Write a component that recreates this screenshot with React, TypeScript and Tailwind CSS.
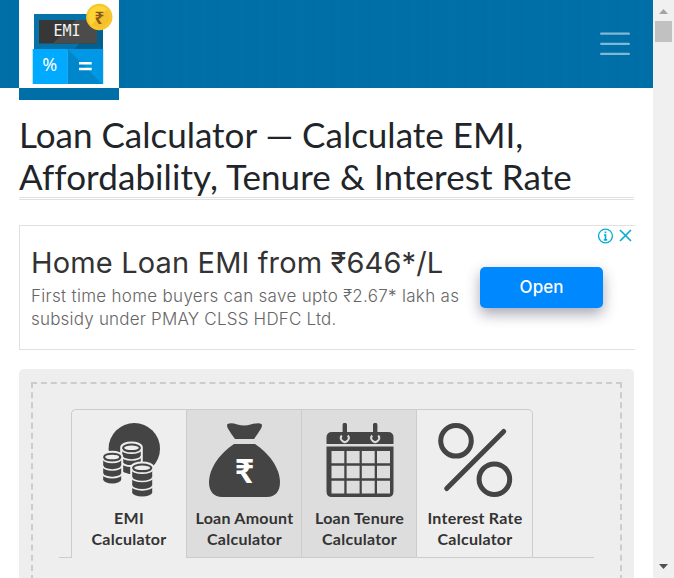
import type { ReactNode } from 'react';

function Logo() {
  return (
    <svg width="100" height="88" viewBox="0 0 100 88" className="block bg-white">
      <rect x="15" y="14" width="69" height="36" fill="#0573a8" />
      <path d="M54 50L84 20V50Z" fill="#00608f" />
      <rect x="20" y="20" width="58" height="23.500" fill="#373737" />
      <path d="M34 43.500L57 20H78V43.500Z" fill="#4b4b4b" />
      <rect x="13.700" y="49" width="35" height="35" fill="#00aaff" />
      <rect x="48.700" y="49" width="35.500" height="35" fill="#0098e4" />
      <path d="M48.700 49L83 84H48.700Z" fill="#0087cb" />
      <text x="48" y="36.200" textAnchor="middle" className="font-['DejaVu_Sans_Mono',monospace]" fontSize="15" fill="#f4f4f4">EMI</text>
      <text x="30.800" y="71.300" textAnchor="middle" className="font-['Noto_Sans',sans-serif]" fontSize="18" fill="#fff">%</text>
      <path d="M60 63.200H72.700M60 69H72.700" stroke="#fff" strokeWidth="2.500" />
      <circle cx="80.300" cy="17" r="13.200" fill="#f6c62c" />
      <circle cx="80.300" cy="17" r="11" fill="#fdd535" />
      <path d="M72.500 24.800A11 11 0 0 0 88 9.200Z" fill="#f5bf2e" />
      <text x="80.300" y="23.500" textAnchor="middle" className="font-['Noto_Sans',sans-serif]" fontWeight="700" fontSize="17" fill="#8a5618">₹</text>
    </svg>
  );
}

function CoinStack({ x, y, w, rows, gap }: { x: number; y: number; w: number; rows: number; gap: number }) {
  const r = w / 2;
  const h = rows * gap;
  return (
    <g transform={`translate(${x} ${y})`}>
      <path d={`M0 0A${r} 4 0 0 1 ${w} 0V${h}A${r} 4 0 0 1 0 ${h}Z`} fill="#444" stroke="#eee" strokeWidth="4" />
      <path d={`M0 0A${r} 4 0 0 1 ${w} 0V${h}A${r} 4 0 0 1 0 ${h}Z`} fill="#444" />
      <ellipse cx={r} cy="0.300" rx={r - 2} ry="2.300" fill="#eee" />
      {Array.from({ length: rows }, (_, i) => (
        <path key={i} d={`M-.5 ${i * gap + 1.5}A${r} 4 0 0 0 ${w + 0.5} ${i * gap + 1.5}`} fill="none" stroke="#eee" strokeWidth="1.700" />
      ))}
    </g>
  );
}

function CoinsIcon() {
  return (
    <svg width="75" height="75" viewBox="0 0 75 75">
      <circle cx="42.300" cy="25.700" r="25.700" fill="#444" />
      <CoinStack x={30.2} y={24.5} w={18.6} rows={2} gap={6.8} />
      <CoinStack x={11.2} y={33.7} w={18} rows={3} gap={7.6} />
      <CoinStack x={40.2} y={44.5} w={20} rows={3} gap={8.3} />
    </svg>
  );
}

function BagIcon() {
  return (
    <svg width="75" height="75" viewBox="0 0 75 75">
      <path d="M20.500 1C25 -1.500 31 2.500 37.500 2.500S50 -1.500 54.500 1C56 3 54 6 47 16H28C21 6 19 3 20.500 1Z" fill="#444" />
      <path d="M27 21H48C61 29.500 73 44.500 73 59.500C73 68.500 68 74 60 74H15C7 74 2 68.500 2 59.500C2 44.500 14 29.500 27 21Z" fill="#444" />
      <text x="37.500" y="59.500" textAnchor="middle" className="font-['Lato',sans-serif]" fontWeight="900" fontSize="33" fill="#fff">₹</text>
    </svg>
  );
}

function CalendarIcon() {
  return (
    <svg width="75" height="75" viewBox="0 0 75 75">
      <path d="M10 9H66Q71.500 9 71.500 14.500V21H4.500V14.500Q4.500 9 10 9Z" fill="#444" />
      <path transform="translate(0 -.5)" fillRule="evenodd" d="M4.500 24H71.500V69Q71.500 74.500 66 74.500H10Q4.500 74.500 4.500 69ZM9.500 28.500V40.800H22.300V28.500ZM24.600 28.500V40.800H37.600V28.500ZM39.800 28.500V40.800H52.700V28.500ZM55 28.500V40.800H68V28.500ZM9.500 43.200V55.700H22.300V43.200ZM24.600 43.200V55.700H37.600V43.200ZM39.800 43.200V55.700H52.700V43.200ZM55 43.200V55.700H68V43.200ZM9.500 58.200V71H22.300V58.200ZM24.600 58.200V71H37.600V58.200ZM39.800 58.200V71H52.700V58.200ZM55 58.200V71H68V58.200Z" fill="#444" />
      <path d="M19.800 12.500A3.900 3.900 0 1 0 25.800 12.500M50.200 12.500A3.900 3.900 0 1 0 56.200 12.500" fill="none" stroke="#ddd" strokeWidth="2" />
      <path d="M22.800 2V12M53.200 2V12" stroke="#444" strokeWidth="4.400" strokeLinecap="round" />
    </svg>
  );
}

function PercentIcon() {
  return (
    <svg width="75" height="75" viewBox="0 0 75 75" fill="none" stroke="#444" strokeWidth="5" strokeLinecap="round">
      <circle cx="18" cy="17.800" r="15.300" />
      <circle cx="56.400" cy="56.200" r="15.300" />
      <path d="M8.700 65.500L65.700 8.500" />
    </svg>
  );
}

function Tab({ icon, title, className }: { icon: ReactNode; title: string; className: string }) {
  return (
    <div className={`flex flex-col items-center border-[#ccc] pt-[13px] ${className}`}>
      {icon}
      <div className="mt-[9px] text-center text-[16px] font-bold leading-[21px] tracking-[0.25px] text-[#333]">
        <div className="whitespace-nowrap">{title}</div>
        <div>Calculator</div>
      </div>
    </div>
  );
}

export default function App() {
  return (
    <div className="flex h-[578px] w-[674px] overflow-hidden bg-white font-['Lato',sans-serif] [font-variant-ligatures:none]">
      <main className="h-full w-[653px] shrink-0 overflow-hidden">
        <header className="flex h-[88px] items-start justify-between bg-[#006fa8] bg-[repeating-linear-gradient(90deg,#006ea7_0px,#006fa8_5px,#006ea6_9px,#0070a9_14px,#006ea7_19px)] pl-[19px] pr-[23px]">
          <div className="h-[100px] w-[100px] bg-[#006fa8]">
            <Logo />
          </div>
          <svg width="30" height="26" viewBox="0 0 30 26" className="mt-[31px]" stroke="#80b7d4" strokeWidth="2.200" strokeLinecap="round">
            <path d="M1.100 2.700H28.900M1.100 12.800H28.900M1.100 22.900H28.900" />
          </svg>
        </header>

        <h1 className="ml-[19px] mt-[25px] h-[87px] w-[615px] border-b-[3px] border-double border-[#e1e1e1] text-[35px] leading-[42px] text-[#212529]">
          <div className="whitespace-nowrap">Loan Calculator — Calculate EMI,</div>
          <div className="whitespace-nowrap tracking-[0.09px]">Affordability, Tenure &amp; Interest Rate</div>
        </h1>

        <section className="ml-[19px] mt-[25px] flex h-[125px] w-[616px] border border-r-0 border-[#e1e1e1] font-['Inter',sans-serif]">
          <div className="w-[449px] pl-[11px] pt-[17px]">
            <div className="whitespace-nowrap text-[29px] leading-[40px] tracking-[0.15px] text-[#333]">Home Loan EMI from ₹646*/L</div>
            <div className="mt-[2px] whitespace-nowrap text-[17px] font-light leading-[23px] text-[#666]">
              <div className="tracking-[0.3px]">First time home buyers can save upto ₹2.67* lakh as</div>
              <div className="tracking-[0.2px]">subsidy under PMAY CLSS HDFC Ltd.</div>
            </div>
          </div>
          <div className="flex w-[166px] flex-col">
            <div className="flex h-[19px] items-center justify-end gap-[5px] pr-[3px]">
              <svg width="16" height="16" viewBox="0 0 16 16" fill="none" stroke="#00aecd">
                <circle cx="7.500" cy="8" r="6.900" strokeWidth="1.300" />
                <path d="M7.500 3.500V5.300M6 7H7.500V11.700M5.800 11.900H9.200" strokeWidth="1.600" />
              </svg>
              <svg width="13" height="13" viewBox="0 0 13 13" stroke="#00aecd" strokeWidth="1.600">
                <path d="M1 1L12 12M12 1L1 12" />
              </svg>
            </div>
            <button className="ml-[11px] mt-[22px] h-[41px] w-[123px] rounded-[5px] bg-[#0088ff] text-[17px] font-medium text-white shadow-[0_6px_14px_rgba(60,60,90,0.45)]">
              Open
            </button>
          </div>
        </section>

        <section className="ml-[19px] mt-[19px] h-[240px] w-[615px] rounded-t-[5px] bg-[#eee] px-[12px] pt-[13px]">
          <div className="h-[260px] border-2 border-dashed border-[#ccc] pl-[26px] pr-[26px] pt-[25px]">
            <div className="flex h-[149px]">
              <div className="w-[12px] border-b border-[#ccc]" />
              <Tab icon={<CoinsIcon />} title="EMI" className="w-[115px] rounded-tl-[5px] border-l border-t" />
              <Tab icon={<BagIcon />} title="Loan Amount" className="w-[115px] border-b border-l border-t bg-[#ddd] pl-px" />
              <Tab icon={<CalendarIcon />} title="Loan Tenure" className="w-[115px] border-b border-l border-t bg-[#ddd] pl-px" />
              <Tab icon={<PercentIcon />} title="Interest Rate" className="w-[117px] rounded-tr-[5px] border pl-px" />
              <div className="grow border-b border-[#ccc]" />
            </div>
          </div>
        </section>
      </main>

      <aside className="flex h-full w-[21px] flex-col items-center justify-between bg-[#f0f0f0]">
        <div className="flex flex-col items-center">
          <svg width="17" height="21" viewBox="0 0 17 21">
            <path d="M4 14L8.500 9L13 14Z" fill="#a3a3a3" />
          </svg>
          <div className="h-[21px] w-[17px] bg-[#c1c1c1]" />
        </div>
        <svg width="17" height="21" viewBox="0 0 17 21">
          <path d="M4 7L8.500 12L13 7Z" fill="#505050" />
        </svg>
      </aside>
    </div>
  );
}
